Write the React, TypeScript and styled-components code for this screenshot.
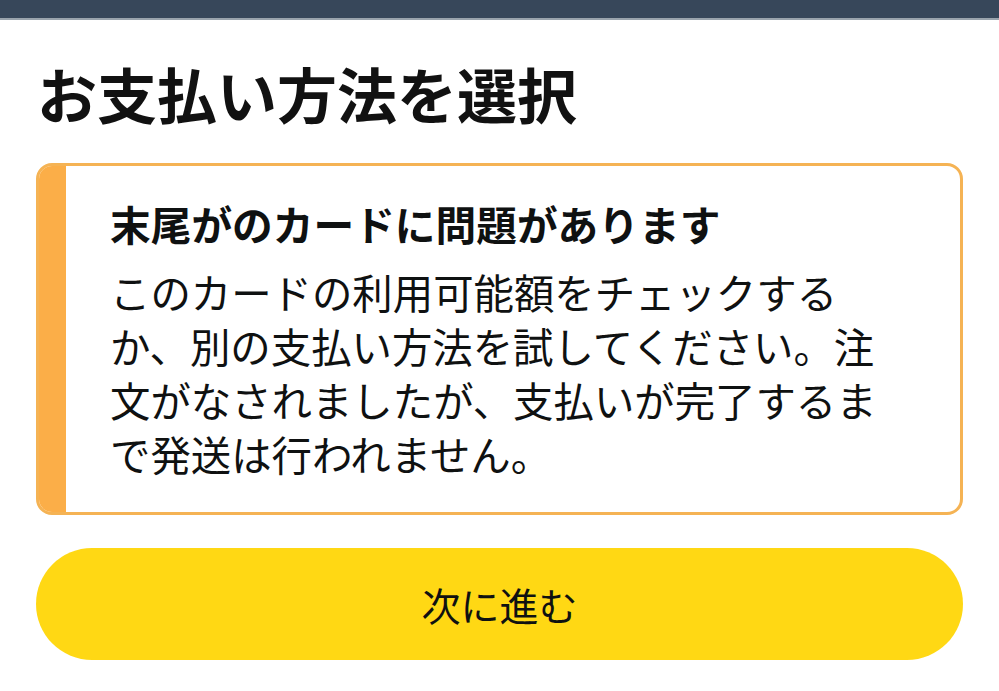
import styled, { createGlobalStyle } from "styled-components";

const GlobalStyle = createGlobalStyle`
  html, body {
    margin: 0;
    padding: 0;
    background: #ffffff;
  }
  body {
    font-family: "Noto Sans CJK JP", "Noto Sans", sans-serif;
    color: #0f1111;
  }
`;

const TopBar = styled.div`
  height: 18px;
  background-color: #37475a;
  border-bottom: 2px solid #9aa4ad;
`;

const Page = styled.main`
  padding: 0 36px;
`;

const Title = styled.h1`
  margin: 37px 0 34px 1px;
  font-size: 60px;
  line-height: 72px;
  font-weight: 700;
  color: #111111;
`;

const Alert = styled.section`
  display: flex;
  border: 3px solid #f5b354;
  border-radius: 16px;
  overflow: hidden;
`;

const Stripe = styled.div`
  flex: 0 0 27px;
  background-color: #fbae48;
`;

const AlertBody = styled.div`
  flex: 1;
  padding: 31px 36px 31px 44px;
`;

const AlertHeading = styled.h2`
  margin: 0 0 14px;
  font-size: 40.7px;
  line-height: 54px;
  font-weight: 700;
  color: #0f1111;
`;

const AlertText = styled.p`
  margin: 0;
  font-size: 40.4px;
  line-height: 54px;
  font-weight: 400;
  color: #0f1111;
`;

const NextButton = styled.button`
  display: flex;
  align-items: center;
  justify-content: center;
  width: 100%;
  height: 112px;
  margin-top: 33px;
  border: none;
  border-radius: 56px;
  background-color: #ffd814;
  font-family: inherit;
  font-size: 39px;
  color: #0f1111;
  cursor: pointer;
`;

const lines = [
  "このカードの利用可能額をチェックする",
  "か、別の支払い方法を試してください。注",
  "文がなされましたが、支払いが完了するま",
  "で発送は行われません。",
];

export default function App() {
  return (
    <>
      <GlobalStyle />
      <TopBar />
      <Page>
        <Title>お支払い方法を選択</Title>
        <Alert>
          <Stripe />
          <AlertBody>
            <AlertHeading>末尾がのカードに問題があります</AlertHeading>
            <AlertText>
              {lines.map((line, i) => (
                <span key={i}>
                  {line}
                  {i < lines.length - 1 && <br />}
                </span>
              ))}
            </AlertText>
          </AlertBody>
        </Alert>
        <NextButton>次に進む</NextButton>
      </Page>
    </>
  );
}
